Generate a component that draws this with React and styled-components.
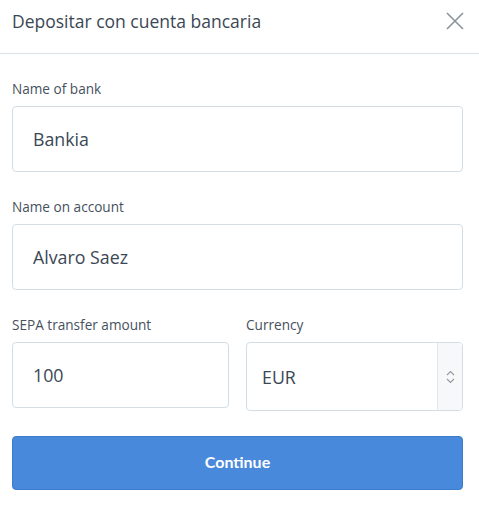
import React from 'react'
import styled, { createGlobalStyle } from 'styled-components'

const GlobalStyle = createGlobalStyle`
    body {
        margin: 0;
        background: #ffffff;
        font-family: "Open Sans", "Liberation Sans", sans-serif;
    }
`

const App = () => {
    return (
        <Modal>
            <GlobalStyle />
            <Header>
                <Title>Depositar con cuenta bancaria</Title>
                <CloseButton aria-label="Close">
                    <svg width="18" height="18" viewBox="0 0 18 18">
                        <path d="M1 1L17 17M17 1L1 17" stroke="#8a939c" strokeWidth="1.6" fill="none" />
                    </svg>
                </CloseButton>
            </Header>
            <Form>
                <Field>
                    <Label>Name of bank</Label>
                    <Input defaultValue="Bankia" />
                </Field>
                <Field>
                    <Label>Name on account</Label>
                    <Input defaultValue="Alvaro Saez" />
                </Field>
                <Row>
                    <Field>
                        <Label>SEPA transfer amount</Label>
                        <Input defaultValue="100" />
                    </Field>
                    <Field>
                        <Label>Currency</Label>
                        <Select>
                            <SelectValue>EUR</SelectValue>
                            <SelectArrow>
                                <svg width="9" height="16" viewBox="0 0 9 16">
                                    <path d="M1 6L4.5 2.5L8 6M1 10L4.5 13.5L8 10" stroke="#8f9aa6" strokeWidth="1.1" fill="none" />
                                </svg>
                            </SelectArrow>
                        </Select>
                    </Field>
                </Row>
                <Button>Continue</Button>
            </Form>
        </Modal>
    )
}

export default App

const Modal = styled.div`
    width: 479px;
    height: 505px;
    background: #ffffff;
    color: #3b4754;
`

const Header = styled.div`
    height: 54px;
    box-sizing: border-box;
    border-bottom: 1px solid #d8e1e8;
    display: flex;
    align-items: center;
    justify-content: space-between;
    padding: 0 15px 11px 12px;
`

const Title = styled.h1`
    margin: 0;
    font-size: 17.5px;
    font-weight: 400;
    color: #3b4754;
`

const CloseButton = styled.button`
    border: 0;
    background: none;
    padding: 0;
    display: flex;
    cursor: pointer;
`

const Form = styled.div`
    display: flex;
    flex-direction: column;
    gap: 25px;
    padding: 25px 16px 0 12px;
`

const Row = styled.div`
    display: grid;
    grid-template-columns: 1fr 1fr;
    gap: 17px;
    align-items: start;
`

const Field = styled.div`
    display: flex;
    flex-direction: column;
    gap: 8px;
`

const Label = styled.label`
    font-size: 13.6px;
    line-height: 19px;
    color: #46515d;
`

const Input = styled.input`
    height: 66px;
    box-sizing: border-box;
    border: 1px solid #d3dde6;
    border-radius: 4px;
    padding: 0 20px;
    font-family: inherit;
    font-size: 17.8px;
    color: #3b4754;
    outline: none;
    width: 100%;
`

const Select = styled.div`
    height: 69px;
    box-sizing: border-box;
    border: 1px solid #d3dde6;
    border-radius: 4px;
    display: flex;
    overflow: hidden;
`

const SelectValue = styled.div`
    flex: 1;
    display: flex;
    align-items: center;
    padding-left: 15px;
    font-size: 17.8px;
    color: #3b4754;
`

const SelectArrow = styled.div`
    width: 24px;
    background: #f6f8fa;
    border-left: 1px solid #dfe6ec;
    display: flex;
    align-items: center;
    justify-content: center;
`

const Button = styled.button`
    height: 54px;
    padding: 0 0 3px;
    border: 1px solid #3d7cc9;
    border-radius: 4px;
    background: #4889db;
    color: #ffffff;
    font-family: "Lato", "Open Sans", sans-serif;
    font-weight: 700;
    font-size: 16px;
    cursor: pointer;
`
